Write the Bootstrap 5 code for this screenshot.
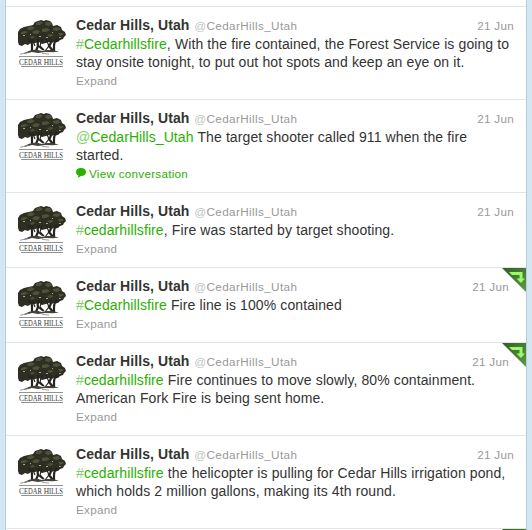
<!DOCTYPE html>
<html lang="en">
<head>
<meta charset="utf-8">
<title>Cedar Hills, Utah</title>
<link href="https://cdn.jsdelivr.net/npm/bootstrap@5.3.0/dist/css/bootstrap.min.css" rel="stylesheet">
<style>
body{background:#d3e7f2;font-family:"Liberation Sans",Arial,sans-serif;font-size:14px;line-height:18px;color:#333;height:530px;overflow:hidden}
.stream{width:522px;height:530px;margin-left:5px;background:#fff;border:solid #b7cddb;border-width:0 1px;padding-top:6px;overflow:hidden}
.tweet{border-top:1px solid #e4e4e4;padding:9px 12px 9px;column-gap:10px}
.avatar{width:48px;height:49px;margin-top:3px}
.tweet a{color:#2bb000;text-decoration:none}
.byline{height:19px}
.message{letter-spacing:.09px;word-spacing:.1px}
.fullname{font-size:14px;color:#333;letter-spacing:.08px}
.handle,.stamp,.action{font-size:11.7px;color:#999;letter-spacing:.26px}
.action{padding-top:1px}
.handle{letter-spacing:.38px;margin-left:1px}
.stamp{padding-top:1px}
.tweet .at{opacity:.6}
.corner{width:24px;height:24px}
.marked .stamp{margin-right:5px}
.bubble{width:10px;height:10px;margin:3px 3px 0 0}
</style>
<script src="https://cdn.jsdelivr.net/npm/bootstrap@5.3.0/dist/js/bootstrap.bundle.min.js"></script>
</head>
<body>
<svg width="0" height="0" class="position-absolute" aria-hidden="true">
<defs>
<linearGradient id="leaf" x1="0" y1="0" x2="1" y2="1"><stop offset="0" stop-color="#2f5f22"/><stop offset="1" stop-color="#5f9a45"/></linearGradient>
<symbol id="oak" viewBox="0 0 48 49">
<path fill="#2e2f22" d="M15 6l2-3 3-1 3-1 3 1 2-1 4 1 2 2 1 3 4-1 4 2 1 3 3 2 1 3-2 2-1 2-3 1-2 2-3-1-3 2-3-1-3 1-4 1-3-2-4 1-4 0-3 2-3-1-3 2-3-1-1-3-2 1-2-2-1-3-2-2 1-2 3-2 3 0 2-3 4-2z"/>
<path fill="#4e5239" d="M18 4l4-2 3 2-3 2-4 0zM28 3l4 0 2 2-3 2-4-1zM9 9l4-2 4 2-3 2-4 0zM3 13l4-1 3 1-4 2-3 0zM14 13l4-2 4 1-2 3-4 0zM24 10l5-1 3 2-4 2-4 0zM35 9l5-1 3 2-4 2-4-1zM40 14l4 0 2 1-4 2zM29 16l4-1 3 1-4 2zM12 18l3-1 2 1-3 2z"/>
<path fill="#a9aa9c" d="M5 16h2v1H5zM12 15h1v1h-1zM21 17h2v1h-2zM34 13h1v1h-1zM28 18h2v1h-2zM41 18h2v1h-2z"/>
<g fill="none" stroke="#26231f">
<path stroke-width="2.200" d="M10 21q4 1 4 5l0 6M21 20q-2 4-1 7l-2 5M32 20q2 4-1 7l4 5M39 20q-3 3-3 7v5"/>
<path stroke-width="1.200" d="M14 20l3 7M24 20l-2 7 4 4M28 20l3 7-4 5M20 27l5 4M43 19l-5 4"/>
</g>
<path fill="#45423e" d="M12 31.500l6-1 6 1.500 5-1 5 0 7 1.500-6 .8-8-.4-7 1-6-1-6 1.500-3 0z"/>
<path stroke="#8b8783" stroke-width=".8" d="M2 35.200l8-1.700M24 34.300l7 .8"/>
<path stroke="#929292" d="M1 37.500h44M3 47.500h42"/>
<text x="1" y="45.600" font-family="Liberation Serif,serif" font-size="8.600" fill="#383838" textLength="44" lengthAdjust="spacingAndGlyphs">C<tspan font-size="7.600">EDAR</tspan> H<tspan font-size="7.600">ILLS</tspan></text>
</symbol>
<symbol id="retweet" viewBox="0 0 24 24"><path fill="url(#leaf)" d="M0 0h24v24z"/><path fill="#9cfa6a" d="M7 4h13.500v6.500H23l-4 4.500-4.500-4.500H17.500V7H10z"/></symbol>
</defs>
</svg>
<main class="stream">
<article class="tweet d-flex"><svg class="avatar flex-shrink-0"><use href="#oak"/></svg><div class="flex-grow-1"><div class="byline d-flex justify-content-between"><div><b class="fullname">Cedar Hills, Utah</b> <span class="handle"><span class="at">@</span>CedarHills_Utah</span></div><span class="stamp">21 Jun</span></div><div class="message"><a href="#"><span class="at">#</span>Cedarhillsfire</a>, With the fire contained, the Forest Service is going to<br>stay onsite tonight, to put out hot spots and keep an eye on it.</div><div class="action">Expand</div></div></article>
<article class="tweet d-flex"><svg class="avatar flex-shrink-0"><use href="#oak"/></svg><div class="flex-grow-1"><div class="byline d-flex justify-content-between"><div><b class="fullname">Cedar Hills, Utah</b> <span class="handle"><span class="at">@</span>CedarHills_Utah</span></div><span class="stamp">21 Jun</span></div><div class="message"><a href="#"><span class="at">@</span>CedarHills_Utah</a> The target shooter called 911 when the fire<br>started.</div><div class="action"><a href="#" class="d-flex"><svg class="bubble" viewBox="0 0 10 10"><path fill="#2bb000" d="M5 0c3 0 5 1.600 5 4s-2 4-5 4L2 10l.5-2.500C1 7 0 5.600 0 4c0-2.400 2-4 5-4z"/></svg>View conversation</a></div></div></article>
<article class="tweet d-flex"><svg class="avatar flex-shrink-0"><use href="#oak"/></svg><div class="flex-grow-1"><div class="byline d-flex justify-content-between"><div><b class="fullname">Cedar Hills, Utah</b> <span class="handle"><span class="at">@</span>CedarHills_Utah</span></div><span class="stamp">21 Jun</span></div><div class="message"><a href="#"><span class="at">#</span>cedarhillsfire</a>, Fire was started by target shooting.</div><div class="action">Expand</div></div></article>
<article class="tweet marked d-flex position-relative"><svg class="corner position-absolute top-0 end-0"><use href="#retweet"/></svg><svg class="avatar flex-shrink-0"><use href="#oak"/></svg><div class="flex-grow-1"><div class="byline d-flex justify-content-between"><div><b class="fullname">Cedar Hills, Utah</b> <span class="handle"><span class="at">@</span>CedarHills_Utah</span></div><span class="stamp">21 Jun</span></div><div class="message"><a href="#"><span class="at">#</span>Cedarhillsfire</a> Fire line is 100% contained</div><div class="action">Expand</div></div></article>
<article class="tweet marked d-flex position-relative"><svg class="corner position-absolute top-0 end-0"><use href="#retweet"/></svg><svg class="avatar flex-shrink-0"><use href="#oak"/></svg><div class="flex-grow-1"><div class="byline d-flex justify-content-between"><div><b class="fullname">Cedar Hills, Utah</b> <span class="handle"><span class="at">@</span>CedarHills_Utah</span></div><span class="stamp">21 Jun</span></div><div class="message"><a href="#"><span class="at">#</span>cedarhillsfire</a> Fire continues to move slowly, 80% containment.<br>American Fork Fire is being sent home.</div><div class="action">Expand</div></div></article>
<article class="tweet d-flex"><svg class="avatar flex-shrink-0"><use href="#oak"/></svg><div class="flex-grow-1"><div class="byline d-flex justify-content-between"><div><b class="fullname">Cedar Hills, Utah</b> <span class="handle"><span class="at">@</span>CedarHills_Utah</span></div><span class="stamp">21 Jun</span></div><div class="message"><a href="#"><span class="at">#</span>cedarhillsfire</a> the helicopter is pulling for Cedar Hills irrigation pond,<br>which holds 2 million gallons, making its 4th round.</div><div class="action">Expand</div></div></article>
<article class="tweet position-relative"><svg class="corner position-absolute top-0 end-0"><use href="#retweet"/></svg></article>
</main>
</body>
</html>
